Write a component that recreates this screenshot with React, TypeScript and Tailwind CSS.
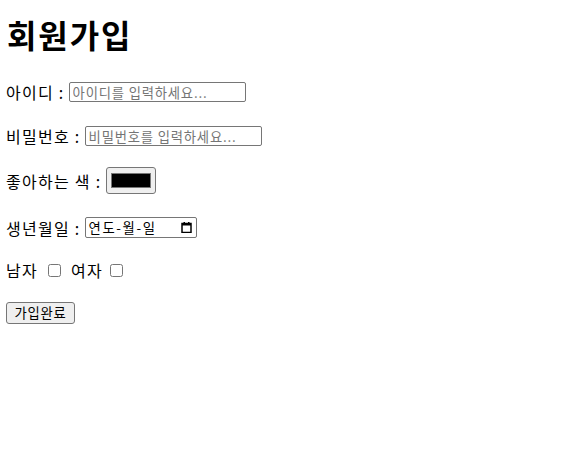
export default function App() {
  return (
    <div className="min-h-screen bg-white px-[6px] font-['Noto_Sans_CJK_KR','Malgun_Gothic',sans-serif] text-black">
      <h1 className="pt-[18px] pl-[1px] text-[32px] leading-[32px] font-bold tracking-[0.06em]">회원가입</h1>

      <form className="flex flex-col items-start text-[16px] tracking-[0.08em]">
        {/* 아이디 */}
        <div className="mt-[32px] flex h-[20px] items-center">
          <label htmlFor="uid" className="mr-[4px]">아이디 :</label>
          <input
            id="uid"
            type="text"
            placeholder="아이디를 입력하세요..."
            className="h-[20px] w-[177px] rounded-[2px] border border-[#767676] px-[3px] text-[13.33px] tracking-[0.06em] placeholder:text-[#757575]"
          />
        </div>

        {/* 비밀번호 */}
        <div className="mt-[24px] flex h-[20px] items-center">
          <label htmlFor="pw" className="mr-[4px]">비밀번호 :</label>
          <input
            id="pw"
            type="password"
            placeholder="비밀번호를 입력하세요..."
            className="h-[20px] w-[177px] rounded-[2px] border border-[#767676] px-[3px] text-[13.33px] tracking-[0.06em] placeholder:text-[#757575]"
          />
        </div>

        {/* 좋아하는 색 */}
        <div className="mt-[21px] flex h-[27px] items-center">
          <span className="mr-[5px]">좋아하는 색 :</span>
          <button
            type="button"
            className="flex h-[27px] w-[50px] items-center justify-center rounded-[3px] border border-[#767676] bg-[#efefef]"
          >
            <span className="block h-[15px] w-[40px] border border-[#777777] bg-black" />
          </button>
        </div>

        {/* 생년월일 */}
        <div className="mt-[23px] flex h-[21px] items-center">
          <span className="mr-[4px]">생년월일 :</span>
          <div className="flex h-[21px] w-[112px] items-center justify-between rounded-[2px] border border-[#767676] pr-[4px] pl-[3px] text-[13.33px]">
            <span className="tracking-[0.12em]">연도-월-일</span>
            <svg width="11" height="11" viewBox="0 0 11 11" fill="none">
              <rect x="1" y="1.5" width="9" height="9" stroke="black" strokeWidth="1.5" />
              <rect x="1" y="1" width="9" height="2.5" fill="black" />
              <rect x="2.5" y="0" width="1.5" height="2" fill="black" />
              <rect x="7" y="0" width="1.5" height="2" fill="black" />
            </svg>
          </div>
        </div>

        {/* 성별 */}
        <div className="mt-[22px] flex h-[20px] items-center">
          <span>남자</span>
          <input type="checkbox" className="mr-[10px] ml-[10px] h-[13px] w-[13px]" />
          <span>여자</span>
          <input type="checkbox" className="ml-[7px] h-[13px] w-[13px]" />
        </div>

        <button
          type="submit"
          className="mt-[22px] h-[22px] w-[69px] rounded-[3px] border border-[#767676] bg-[#efefef] text-[13.33px] leading-none tracking-[0.06em]"
        >
          가입완료
        </button>
      </form>
    </div>
  );
}
